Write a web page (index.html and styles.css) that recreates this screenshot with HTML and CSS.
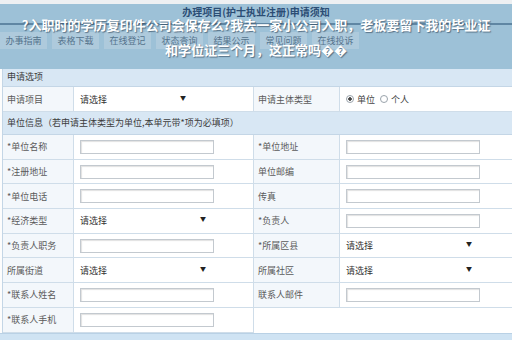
FILE: index.html
```html
<!DOCTYPE html>
<html lang="zh">
<head>
  <meta charset="UTF-8">
  <meta name="viewport" content="width=device-width, initial-scale=1.0">
  <title>办理项目(护士执业注册)申请须知</title>
  <link rel="stylesheet" href="styles.css">
</head>
<body>
  <div class="top">
    <div class="strip"></div>
    <div class="head">
      <div class="title">办理项目(护士执业注册)申请须知</div>
      <div class="rule"></div>
      <ul class="tabs">
        <li>办事指南</li>
        <li>表格下载</li>
        <li>在线登记</li>
        <li>状态查询</li>
        <li>结果公示</li>
        <li>常见问题</li>
        <li>在线投诉</li>
      </ul>
    </div>
    <p class="overlay">?入职时的学历复印件公司会保存么?我去一家小公司入职，老板要留下我的毕业证<br>和学位证三个月，这正常吗��</p>
  </div>

  <div class="form">
    <div class="sec">申请选项</div>
    <div class="grid">
      <div class="lab">申请项目</div>
      <div class="val"><div class="sel short"><span>请选择</span><i>▼</i></div></div>
      <div class="lab">申请主体类型</div>
      <div class="val radios">
        <span class="dot on"></span><span>单位</span>
        <span class="dot"></span><span>个人</span>
      </div>
    </div>

    <div class="sec tall">单位信息（若申请主体类型为单位,本单元带*项为必填项）</div>
    <div class="grid rows">
      <div class="lab">*单位名称</div>
      <div class="val"><input type="text"></div>
      <div class="lab">*单位地址</div>
      <div class="val"><input type="text"></div>

      <div class="lab">*注册地址</div>
      <div class="val"><input type="text"></div>
      <div class="lab">单位邮编</div>
      <div class="val"><input type="text"></div>

      <div class="lab">*单位电话</div>
      <div class="val"><input type="text"></div>
      <div class="lab">传真</div>
      <div class="val"><input type="text"></div>

      <div class="lab">*经济类型</div>
      <div class="val"><div class="sel"><span>请选择</span><i>▼</i></div></div>
      <div class="lab">*负责人</div>
      <div class="val"><input type="text"></div>

      <div class="lab">*负责人职务</div>
      <div class="val"><input type="text"></div>
      <div class="lab">*所属区县</div>
      <div class="val"><div class="sel"><span>请选择</span><i>▼</i></div></div>

      <div class="lab">所属街道</div>
      <div class="val"><div class="sel"><span>请选择</span><i>▼</i></div></div>
      <div class="lab">所属社区</div>
      <div class="val"><div class="sel"><span>请选择</span><i>▼</i></div></div>

      <div class="lab">*联系人姓名</div>
      <div class="val"><input type="text"></div>
      <div class="lab">联系人邮件</div>
      <div class="val"><input type="text"></div>

      <div class="lab">*联系人手机</div>
      <div class="val"><input type="text"></div>
      <div class="blank"></div>
      <div class="blank"></div>
    </div>
  </div>
  <div class="foot"></div>
</body>
</html>
```

FILE: styles.css
```css
body { margin: 0; width: 512px; height: 340px; overflow: hidden; background: #fdfdfd; font-family: "Noto Sans CJK SC", "Noto Sans", sans-serif; font-size: 9px; color: #5a5a5a; }

.top { position: relative; }
.strip { height: 4px; background: #eef0f2; }
.head { height: 65px; background: #9dc1d7; }
.title { height: 14px; padding-top: 1px; line-height: 14px; text-align: center; font-size: 10px; font-weight: bold; color: #2b4d74; }
.rule { height: 2px; margin-top: 4px; background: #5f86a3; }
.tabs { display: flex; gap: 5px; margin: 7px 0 0; padding: 0; list-style: none; }
.tabs li { width: 47px; height: 17px; line-height: 17px; text-align: center; background: #aecadc; color: #55738c; }

.overlay { position: absolute; top: 12px; left: 0; right: 0; margin: 0; text-align: center; font-size: 13px; line-height: 25px; font-weight: bold; color: #fff; text-shadow: 1px 1px 1px rgba(40, 60, 80, 0.6); }

.form { padding-left: 2px; }
.sec { height: 16px; padding: 1px 0 0 4px; line-height: 13px; background: #d8e7f4; color: #3c3c3c; border-left: 1px solid #c4d6e6; border-bottom: 1px solid #c4d6e6; }
.sec.tall { height: 22px; line-height: 22px; padding-top: 0; }

.grid { display: grid; grid-template-columns: 71px 180px 86px 173px; grid-auto-rows: 25px; border-left: 1px solid #c4d6e6; }
.grid.rows { grid-auto-rows: 24.7px; }
.grid > div { box-sizing: border-box; display: flex; align-items: center; border-right: 1px solid #cfdde9; border-bottom: 1px solid #cfdde9; }
.lab { padding-left: 4px; background: #f3f7fb; }
.val { padding-left: 6px; background: #fff; }
.grid > .blank { background: #fff; border: none; }

input { box-sizing: border-box; width: 134px; height: 14px; margin: 0; border: 1px solid #c3c9cf; box-shadow: inset 1px 1px 1px #e2e2e2; background: #fff; }
.sel { display: flex; justify-content: space-between; width: 126px; color: #333; }
.sel.short { width: 106px; }
.sel i { font-style: normal; font-size: 6px; color: #222; }

.radios { gap: 3px; color: #444; }
.dot { box-sizing: border-box; width: 8px; height: 8px; border: 1px solid #9aa3ab; border-radius: 50%; background: #fff; }
.dot.on { background: radial-gradient(circle, #444 0 1.5px, #fff 2px); }
.radios span + .dot { margin-left: 2px; }

.foot { height: 10px; background: #cfe3f3; border-top: 1px solid #b9d1e5; }
```
